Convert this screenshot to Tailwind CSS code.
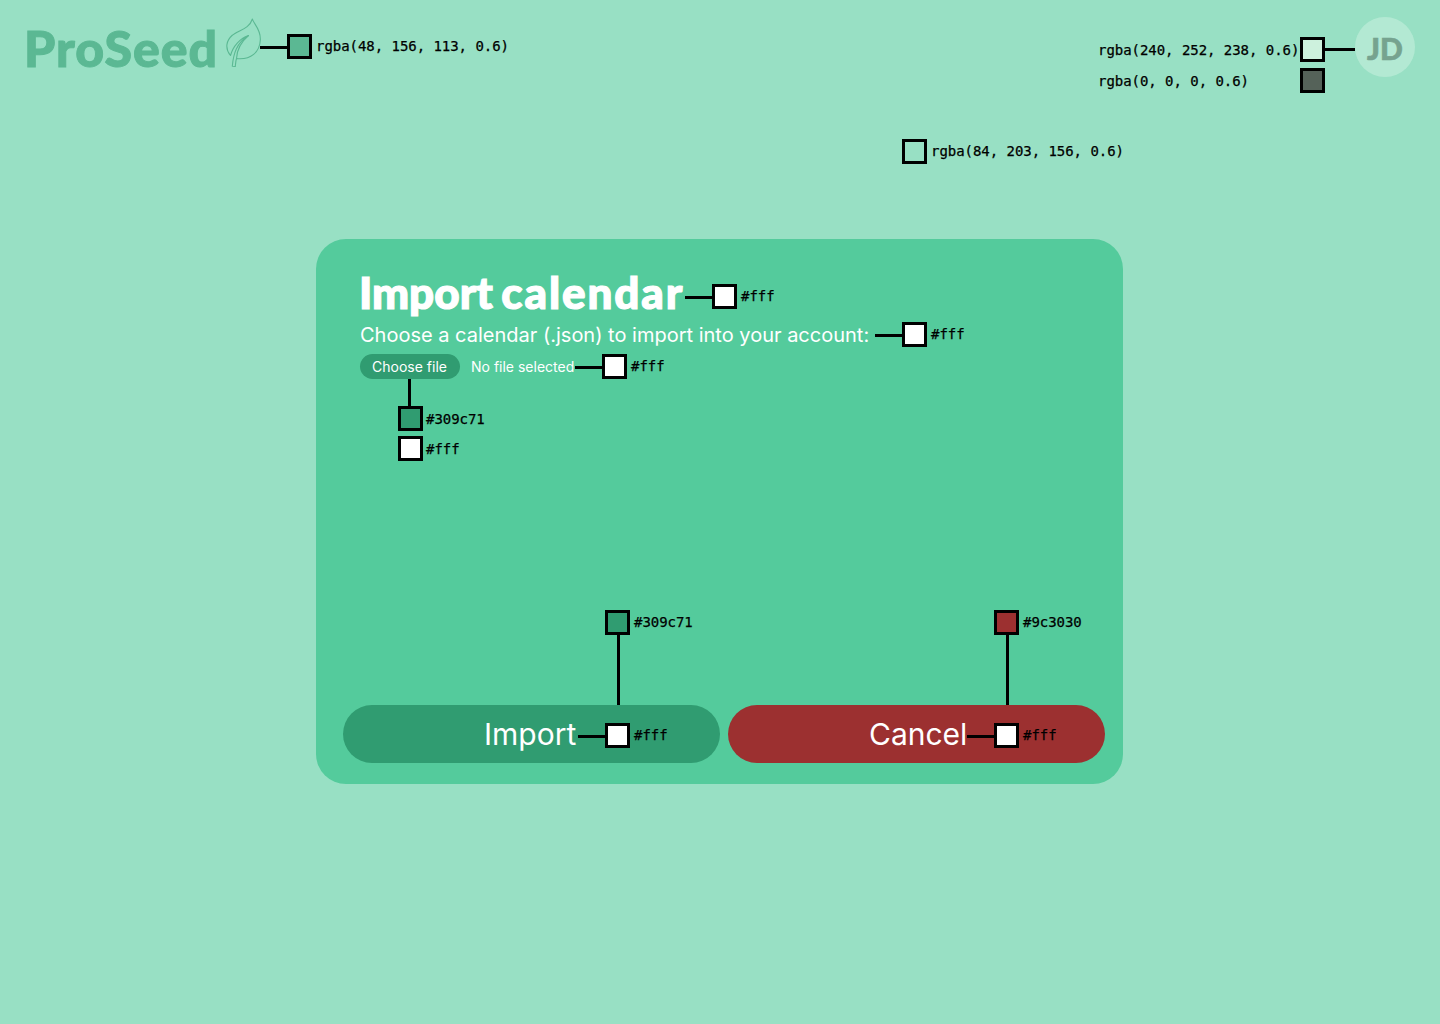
<!DOCTYPE html>
<html lang="en">
<head>
<meta charset="utf-8">
<title>ProSeed – Import calendar</title>
<script src="https://cdn.jsdelivr.net/npm/@tailwindcss/browser@4"></script>
</head>
<body class="relative h-[1024px] w-[1440px] overflow-hidden bg-[#98e0c4] font-['Inter',sans-serif] text-white">

<header class="flex h-[239px] items-start justify-between pr-[25px] pl-[26px] whitespace-nowrap">
  <div class="flex pt-[18px]">
    <div class="-ml-[2px] w-[202px] font-['Lato',sans-serif] text-[50px] leading-[60px] font-black tracking-[1px] text-[#5bb893] [-webkit-text-stroke:1px_#5bb893]">ProSeed</div>
    <svg class="h-[50px] w-[34px] overflow-visible" viewBox="0 0 34 50" fill="none" stroke="#5bb893" stroke-width="1.1" stroke-linejoin="round">
      <path d="M26.400 1C27.500 6 35 11 34.300 22C33.800 34 25 42 10.500 40.500C9.600 43 9.500 46 9.300 48.500L6.300 48.200C7.400 35.500 10.500 25 22.500 17.500C14 20.500 7 28 4.500 37.500C-1.500 30 .5 22.500 6 17.500C12 12 23 11.500 26.400 1Z"/>
      <path d="M22.500 17.500C15.500 23.500 11 31 10.500 40.500"/>
    </svg>
    <div class="mt-[16px] flex h-[25px] items-center font-['DejaVu_Sans_Mono',monospace] text-[14px] text-black [-webkit-text-stroke:0.25px_black]">
      <span class="mt-[2px] h-[3px] w-[27px] bg-black"></span>
      <span class="size-[25px] border-3 border-black bg-[#5bb893]"></span>
      <span class="ml-[4px] tracking-[-0.04px]">rgba(48, 156, 113, 0.6)</span>
    </div>
  </div>
  <div class="flex pt-[17px]">
    <div class="flex w-[257px] flex-col gap-[6px] pt-[20px] font-['DejaVu_Sans_Mono',monospace] text-[14px] tracking-[-0.04px] text-black [-webkit-text-stroke:0.25px_black]">
      <div class="flex h-[25px] items-center">
        <span class="w-[202px] pt-[2px]">rgba(240, 252, 238, 0.6)</span>
        <span class="size-[25px] shrink-0 border-3 border-black bg-[#cdf1dd]"></span>
        <span class="-mt-[1px] h-[3px] w-[30px] shrink-0 bg-black"></span>
      </div>
      <div class="flex h-[25px] items-center">
        <span class="w-[202px] pt-[2px]">rgba(0, 0, 0, 0.6)</span>
        <span class="size-[25px] shrink-0 border-3 border-black bg-[#556259]"></span>
      </div>
    </div>
    <div class="flex size-[60px] items-center justify-center rounded-full bg-[#b3e9d3] pt-[2px] font-['Lato',sans-serif] text-[30px] leading-none font-black text-[#76a38f] [-webkit-text-stroke:0.6px_#76a38f]">JD</div>
  </div>
</header>

<div class="absolute top-[139px] left-[902px] flex h-[25px] items-center font-['DejaVu_Sans_Mono',monospace] text-[14px] tracking-[-0.04px] whitespace-nowrap text-black [-webkit-text-stroke:0.25px_black]">
  <span class="size-[25px] border-3 border-black"></span>
  <span class="ml-[4px]">rgba(84, 203, 156, 0.6)</span>
</div>

<main class="ml-[316px] flex h-[545px] w-[807px] flex-col rounded-[30px] bg-[#54cb9c] pt-[35px] pr-[18px] pb-[21px] pl-[27px] whitespace-nowrap">
  <div class="flex h-[45px] items-center pl-[17px]">
    <h1 class="-mt-[8px] w-[325px] font-['Lato',sans-serif] text-[44px] leading-[45px] font-black tracking-[1.9px] [-webkit-text-stroke:1.2px_white]"><span class="-ml-[1px] tracking-[0px]">Import</span><span class="tracking-[-2px]"> </span>calendar</h1>
    <span class="mt-[2px] h-[3px] w-[27px] bg-black"></span>
    <span class="size-[25px] border-3 border-black bg-white"></span>
    <span class="ml-[4px] font-['DejaVu_Sans_Mono',monospace] text-[14px] text-black [-webkit-text-stroke:0.25px_black]">#fff</span>
  </div>
  <div class="mt-[3px] flex h-[25px] items-center pl-[17px]">
    <p class="w-[515px] text-[20px]">Choose a calendar (.json) to import into your account:</p>
    <span class="mt-[2px] h-[3px] w-[27px] bg-black"></span>
    <span class="size-[25px] border-3 border-black bg-white"></span>
    <span class="ml-[4px] font-['DejaVu_Sans_Mono',monospace] text-[14px] text-black [-webkit-text-stroke:0.25px_black]">#fff</span>
  </div>
  <div class="mt-[7px] flex h-[25px] items-center pl-[17px]">
    <button class="h-[25px] w-[100px] rounded-full bg-[#309c71] pr-[1px] text-[14px]">Choose file</button>
    <span class="ml-[11px] w-[104px] text-[14px]">No file selected</span>
    <span class="mt-[2px] h-[3px] w-[27px] bg-black"></span>
    <span class="size-[25px] border-3 border-black bg-white"></span>
    <span class="ml-[4px] font-['DejaVu_Sans_Mono',monospace] text-[14px] text-black [-webkit-text-stroke:0.25px_black]">#fff</span>
  </div>
  <div class="flex flex-col pl-[55px] font-['DejaVu_Sans_Mono',monospace] text-[14px] tracking-[-0.04px] text-black [-webkit-text-stroke:0.25px_black]">
    <span class="ml-[10px] h-[27px] w-[3px] bg-black"></span>
    <div class="flex h-[25px] items-center gap-[3px]"><span class="size-[25px] border-3 border-black bg-[#309c71]"></span><span class="pt-[2px]">#309c71</span></div>
    <div class="mt-[5px] flex h-[25px] items-center gap-[3px]"><span class="size-[25px] border-3 border-black bg-white"></span><span class="pt-[2px]">#fff</span></div>
  </div>
  <div class="mt-auto grid grid-cols-2 gap-[8px] font-['DejaVu_Sans_Mono',monospace] text-[14px] tracking-[-0.04px] text-black [-webkit-text-stroke:0.25px_black]">
    <div class="pl-[262px]">
      <div class="flex h-[25px] items-center gap-[4px]"><span class="size-[25px] border-3 border-black bg-[#309c71]"></span>#309c71</div>
      <div class="ml-[12px] h-[70px] w-[3px] bg-black"></div>
    </div>
    <div class="pl-[266px]">
      <div class="flex h-[25px] items-center gap-[4px]"><span class="size-[25px] border-3 border-black bg-[#9c3030]"></span>#9c3030</div>
      <div class="ml-[12px] h-[70px] w-[3px] bg-black"></div>
    </div>
  </div>
  <div class="grid grid-cols-2 gap-[8px]">
    <button class="flex h-[58px] items-center rounded-full bg-[#309c71] pl-[141px] text-left text-[30px]">
      <span class="w-[94px]">Import</span>
      <span class="mt-[4px] h-[3px] w-[27px] bg-black"></span>
      <span class="mt-[3px] size-[25px] border-3 border-black bg-white"></span>
      <span class="mt-[2px] ml-[4px] font-['DejaVu_Sans_Mono',monospace] text-[14px] text-black [-webkit-text-stroke:0.25px_black]">#fff</span>
    </button>
    <button class="flex h-[58px] items-center rounded-full bg-[#9c3030] pl-[141px] text-left text-[30px]">
      <span class="w-[98px]">Cancel</span>
      <span class="mt-[4px] h-[3px] w-[27px] bg-black"></span>
      <span class="mt-[3px] size-[25px] border-3 border-black bg-white"></span>
      <span class="mt-[2px] ml-[4px] font-['DejaVu_Sans_Mono',monospace] text-[14px] text-black [-webkit-text-stroke:0.25px_black]">#fff</span>
    </button>
  </div>
</main>
</body>
</html>
